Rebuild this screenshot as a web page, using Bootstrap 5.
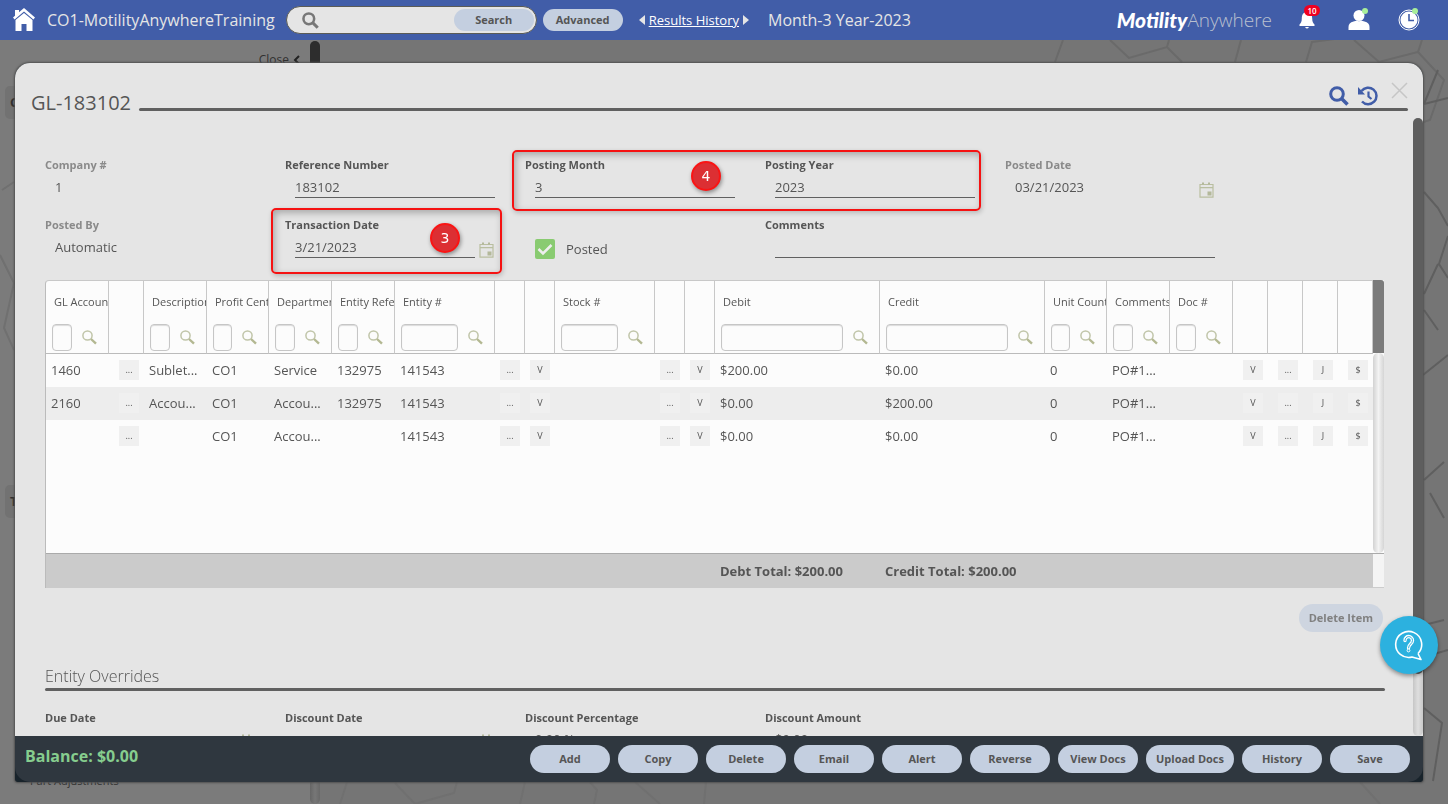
<!DOCTYPE html>
<html lang="en">
<head>
<meta charset="utf-8">
<meta name="viewport" content="width=device-width, initial-scale=1">
<title>GL-183102</title>
<link href="https://cdn.jsdelivr.net/npm/bootstrap@5.3.0/dist/css/bootstrap.min.css" rel="stylesheet">
<style>
body{font-family:"Open Sans","Noto Sans",sans-serif;font-size:13px;line-height:20px;color:#555;background:#757575;height:100vh;overflow:hidden}
.topbar{flex:none;height:40px;background:#415da8;color:#e5e5e5;padding:0 28px 0 13px;font-size:16px;white-space:nowrap}
.topbar svg,.panel svg,.help svg{display:block;flex:none}
.search{flex:none;width:251px;height:28px;border:1px solid #5b5b55;border-radius:14px;background:#e5e5e5;padding:0 2px 0 15px;margin:0 6px 0 11px}
.search input{border:0;background:none;min-width:0;outline:0;font-size:13px}
.pill{border:0;border-radius:14px;background:#c4cfe0;color:#555;font-size:11px;font-weight:700;line-height:16px;min-width:80px;height:28px;padding:0 10px}
.topbar .pill{height:22px;border-radius:11px}
.history{font-size:13px}
.history a{color:#fff}
.period{margin-left:19px}
.brand-a{font-family:Lato,sans-serif;font-weight:900;font-style:italic;font-size:21px;color:#fff}
.brand-b{font-weight:300;font-size:19px;color:#b9c0cf;margin-right:22px}
.alerts{top:-6px;left:6px;width:16px;height:11px;border-radius:6px;background:#f00020;color:#fff;font-size:8px;line-height:11px;font-weight:600;text-align:center}
.online{top:-1px;right:2px;width:6px;height:6px;border-radius:3px;background:#a9ef9a}
.stage{background:#757575}
.web{inset:0;width:100%;height:100%}
.side{width:320px;background:#7b7b7b;color:#303030;padding:10px 0 0 5px}
.side-bar{right:0;top:1px;bottom:0;width:10px;border-radius:5px;background:linear-gradient(90deg,#666,#777 50%,#696969)}
.side-bar::before{content:"";display:block;height:50%;border-radius:5px;background:#2d2d2d}
.side-close{font-size:12px}
.side-head{width:290px;height:33px;border-radius:5px;background:#727272;font-weight:700;padding:6px 5px}
.side-gap{height:366px}
.side-link{padding:253px 0 0 25px;font-size:11px}
.panel{top:63px;left:15px;right:25px;bottom:22px;border-radius:15px 15px 3px 3px;background:#18232b;box-shadow:0 0 2px 1px #505050;overflow:hidden}
.panel-head{flex:none;height:55px;background:#e5e5e5;padding:0 15px 7px 16px}
.panel-head h1{font-size:20px;line-height:24px;font-weight:400;margin:0;padding-top:28px}
.bar{height:3px;border-radius:2px;background:#606060}
.tools{right:15px;top:19px}
.plain{border:0;background:none;padding:0}
.panel-body{background:#e5e5e5;min-height:0}
.scroller{overflow:hidden;padding:39px 28px 0 30px}
.vbar{width:10px;border-radius:5px;background:linear-gradient(90deg,#c6c6c6,#dedede 50%,#c9c9c9);flex:none}
.vbar::before{content:"";display:block;height:90%;border-radius:5px;background:#5e5e5e}
.fields{display:grid;grid-template-columns:repeat(auto-fill,240px);grid-auto-rows:60px}
.field{padding-right:30px}
.field label{display:block;font-size:11px;line-height:16px;font-weight:700;color:#555}
.field .val{margin:4px 0 0 10px;gap:4px}
.field input[type=text]{width:200px;height:21px;border:0;border-bottom:1px solid #606060;background:none;color:#555;padding:0;font-size:13px;outline:0;border-radius:0}
.field .dated{width:180px!important}
.field .still{border-color:transparent!important}
.field svg{margin-top:4px}
.field.muted label{color:#8a8a8a}
.wide{grid-column:span 2}
.field.wide input[type=text]{width:440px}
.check{padding:22px 0 0 10px;gap:11px}
.check input{appearance:none;margin:0;width:20px;height:20px;border-radius:2px;background:#89cb71 url("data:image/svg+xml,%3Csvg xmlns='http://www.w3.org/2000/svg' viewBox='0 0 20 20'%3E%3Cpath d='M3.500 10l4.500 4.500L16.500 6' fill='none' stroke='%23eee' stroke-width='2.500'/%3E%3C/svg%3E")}
.callout{border:2px solid #f51212;border-radius:5px;box-shadow:1px 2px 5px #0003,inset 2px 3px 7px #0004;pointer-events:none}
.call-a{left:467px;top:-7px;width:469px;height:61px}
.call-b{left:226px;top:51px;width:231px;height:66px}
.dot{width:30px;height:30px;border-radius:50%;border:2px solid #fa1414;background:#dc2f33;color:#fff;font:14px/26px "DejaVu Sans",sans-serif;text-align:center;box-shadow:1px 2px 4px #0006}
.call-a .dot{left:177px;top:9px}
.call-b .dot{left:157px;top:13px}
.gridbox{margin-top:3px;margin-right:2px}
.gl{table-layout:fixed;width:100%;border-collapse:separate;border-spacing:0;background:#fcfcfc;border-left:1px solid #bbb;border-top:1px solid #c8c8c8;border-top-left-radius:4px}
.gl th{height:73px;border-right:1px solid #c8c8c8;border-bottom:1px solid #bbb;padding:0;font-weight:400;vertical-align:top;overflow:hidden}
.gl th span{display:block;font-size:11px;line-height:16px;padding:13px 0 14px 8px;white-space:nowrap;overflow:hidden}
.filter{padding:0 11px 0 6px;gap:10px}
.filter input{flex:1;min-width:0;height:27px;border:1px solid #c6c6c6;border-radius:4px;background:none;padding:0 3px;box-shadow:inset 0 1px 1px #0002}
.gl td{height:33px;padding:0 0 2px 5px;white-space:nowrap;overflow:hidden;text-overflow:ellipsis;vertical-align:middle}
.gl td.act{padding:0 5px 2px 0;text-align:right}
.act button{display:block;margin-left:auto;width:20px;height:20px;border:0;background:#f0f0f0;color:#555;font-size:9px;line-height:20px;padding:0}
.gl tbody tr:nth-child(2){background:#ededed}
.gl tbody tr:last-child td{height:100px}
.gl tfoot td{height:35px;background:#cbcbcb;border-top:1px solid #aaa;font-weight:700;padding-bottom:0;overflow:visible}
.gutter{width:11px;flex:none;background:#fcfcfc}
.g-top{height:73px;background:#7b7b7b;border-radius:0 3px 0 0}
.g-mid{border-radius:5px;background:linear-gradient(90deg,#d2d2d2,#f3f3f3 50%,#d5d5d5)}
.g-low{height:35px;background:#f4f4f4;border-top:1px solid #aaa;border-bottom:1px solid #ccc}
.pill:disabled{color:#808080;background:#ced5e0}
.sub{font-size:16px;line-height:24px;font-weight:300;margin:32px 0 0}
.overrides{margin-top:19px}
.overrides .val{margin-top:3px}
.panel-foot{flex:none;min-height:46px;background:#2f373f;padding:9px 13px 9px 10px;border-radius:0 0 15px 15px}
.balance{font-size:16px;line-height:22px;font-weight:700;color:#86cd8e}
.help{right:10px;top:616px;width:58px;height:58px;border-radius:50%;border:0;background:#2cb1df;box-shadow:0 2px 4px #0006;padding:0 0 0 14px}
</style>
</head>
<body class="d-flex flex-column">
<svg width="0" height="0" class="position-absolute">
<symbol id="mag" viewBox="0 0 15 15"><circle cx="5.500" cy="5.500" r="4.600" fill="none" stroke="#c0c5a9" stroke-width="1.500"/><path d="M9 9l5 4.700" stroke="#b3b892" stroke-width="2.400"/></symbol>
<symbol id="lens" viewBox="0 0 20 20"><circle cx="8" cy="8" r="6.300" fill="none" stroke="currentColor" stroke-width="3"/><path d="M12.500 12.500l6 6" stroke="currentColor" stroke-width="3.600"/></symbol>
<symbol id="cal" viewBox="0 0 15 16"><path d="M1 2.500h13v12.700H1zM1 5.700h13" fill="none" stroke="#b9bea0" stroke-width="1.200"/><path d="M3 .5h2v2H3zM9 .5h2v2H9zM8.500 9.500h4v4h-4z" fill="#b3b89a"/></symbol>
</svg>

<header class="topbar d-flex align-items-center">
<a href="#" aria-label="Home"><svg width="22" height="24" viewBox="0 0 22 24"><path d="M11 0l11 9.500-1.600 1.900L11 3.500l-9.400 7.900L0 9.500 2 7.800V2h4v2.300z" fill="#fff"/><path d="M11 5l8.500 7.100V23h-6v-7h-5v7h-6V12.100z" fill="#fff"/></svg></a>
<span class="ms-2 ps-1">CO1-MotilityAnywhereTraining</span>
<form class="search d-flex align-items-center">
<svg width="17" height="17" color="#777"><use href="#lens"/></svg>
<input type="text" class="flex-grow-1" aria-label="Search text"><button type="button" class="pill">Search</button>
</form>
<button type="button" class="pill">Advanced</button>
<nav class="history d-flex align-items-center gap-1 ms-3">
<svg width="6" height="10"><path d="M6 0v10L0 5z" fill="#e5e5e5"/></svg><a href="#">Results History</a><svg width="6" height="10"><path d="M0 0v10l6-5z" fill="#e5e5e5"/></svg>
</nav>
<span class="period">Month-3 Year-2023</span>
<div class="ms-auto d-flex align-items-center">
<span class="brand-a">Motility</span><span class="brand-b">Anywhere</span>
<a href="#" class="position-relative ms-1" aria-label="Notifications"><svg width="18" height="18" viewBox="0 0 18 18"><path d="M9 1c4 0 5.200 3 5.200 6.500 0 3.500 1 4.500 2.300 6V15h-15v-1.500c1.300-1.500 2.300-2.500 2.300-6C3.800 4 5 1 9 1zM7 16h4q-2 3-4 0z" fill="#fff"/></svg><span class="alerts position-absolute">10</span></a>
<a href="#" class="position-relative ms-4 ps-1" aria-label="Account"><svg class="ms-1" width="22" height="22" viewBox="0 0 22 22"><circle cx="11" cy="6.500" r="5.500" fill="#fff"/><path d="M.5 21v-3q0-4.500 5-5.500l3.500-1q2 1.500 4 0l3.500 1q5 1 5 5.500v3z" fill="#fff"/></svg><span class="online position-absolute"></span></a>
<a href="#" class="position-relative ms-4" aria-label="Time clock"><svg class="ms-1" width="22" height="22" viewBox="0 0 22 22"><circle cx="11" cy="11" r="10" fill="none" stroke="#fff"/><circle cx="11" cy="11" r="8.500" fill="#fff"/><path d="M11 5v6.500h5" fill="none" stroke="#415da8" stroke-width="1.600"/></svg><span class="online position-absolute"></span></a>
</div>
</header>

<main class="stage flex-grow-1 position-relative overflow-hidden">
<aside class="side position-relative h-100">
<div class="side-bar position-absolute"></div>
<div class="side-close d-flex justify-content-end align-items-center gap-1 pe-3 me-1"><span>Close</span><svg width="7" height="10"><path d="M6 1L2 5l4 4" fill="none" stroke="#222" stroke-width="2"/></svg></div>
<div class="side-head mt-3">C</div>
<div class="side-gap"></div>
<div class="side-head">T</div>
<div class="side-gap d-flex flex-column"><span class="side-link">Part Adjustments</span></div>
</aside>
<svg class="web position-absolute" viewBox="0 0 1448 764" preserveAspectRatio="none" fill="none" stroke="#6a6a6a" stroke-width="2">
<path d="M1055 22l8-22M1110 0l19 18 38-11 15 15M1167 7l2-7M1235 22l6-22M1306 22l6-20 30-4M1354 0l25 22 39-10 4-12M1418 12l26 28-14 40-16 5"/>
<path d="M1424 270l14 20M1423 335l25-20M1448 186l-10-18-14-16M1448 196l-9 28 9 14M1424 254l14-30M1424 585l20-5M1424 440l20-18M1424 617l24-7M1424 668l18 15-9 58M1430 453l14 25M1424 64l14-34M1424 64l24-6" stroke="#5f5f5f"/>
<path d="M340 764l7-22 18-6M395 743l20 21 39-11 3-11M525 742l-5 22M590 742l7 8-3 14M635 742l25 22M704 764l2-22M1360 742l20 22M2 150l12-8M0 215l14 28-10 45 10 22" stroke="#707070"/>
</svg>
</main>

<section class="panel position-fixed d-flex flex-column" role="dialog" aria-label="GL-183102">
<div class="panel-head position-relative d-flex align-items-end">
<h1 class="align-self-start">GL-183102</h1><div class="bar flex-grow-1 ms-2"></div>
<div class="tools position-absolute d-flex align-items-start gap-2">
<button type="button" class="plain mt-1" aria-label="Find"><svg width="20" height="20" color="#415da8"><use href="#lens"/></svg></button>
<button type="button" class="plain mt-1" aria-label="History"><svg width="22" height="20" viewBox="0 0 22 20"><path d="M4.500 5A8.300 8.300 0 1 1 5 15.500" fill="none" stroke="#415da8" stroke-width="2.500"/><path d="M1 1v7.500h7z" fill="#415da8"/><path d="M11.500 5.500v5l3 2.500" fill="none" stroke="#415da8" stroke-width="2.200"/></svg></button>
<button type="button" class="plain ms-1" aria-label="Close"><svg width="17" height="17"><path d="M1 1l15 15M16 1L1 16" stroke="#c6c6c6" stroke-width="1.500"/></svg></button>
</div>
</div>

<div class="panel-body d-flex flex-grow-1">
<div class="scroller flex-grow-1">
<div class="fields position-relative">
<div class="field muted"><label for="co">Company #</label><div class="val d-flex"><input id="co" class="still" type="text" value="1" readonly></div></div>
<div class="field"><label for="ref">Reference Number</label><div class="val d-flex"><input id="ref" type="text" value="183102"></div></div>
<div class="field"><label for="pm">Posting Month</label><div class="val d-flex"><input id="pm" type="text" value="3"></div></div>
<div class="field"><label for="py">Posting Year</label><div class="val d-flex"><input id="py" type="text" value="2023"></div></div>
<div class="field muted"><label for="pd">Posted Date</label><div class="val d-flex align-items-center"><input id="pd" class="still dated" type="text" value="03/21/2023" readonly><svg width="15" height="16"><use href="#cal"/></svg></div></div>
<div class="field muted"><label for="pb">Posted By</label><div class="val d-flex"><input id="pb" class="still" type="text" value="Automatic" readonly></div></div>
<div class="field"><label for="td">Transaction Date</label><div class="val d-flex align-items-center"><input id="td" class="dated" type="text" value="3/21/2023"><svg width="15" height="16"><use href="#cal"/></svg></div></div>
<div class="check d-flex align-items-start"><input type="checkbox" id="posted" checked><label for="posted">Posted</label></div>
<div class="field wide"><label for="cm">Comments</label><div class="val d-flex"><input id="cm" type="text"></div></div>
<div class="callout call-a position-absolute"><span class="dot position-absolute">4</span></div>
<div class="callout call-b position-absolute"><span class="dot position-absolute">3</span></div>
</div>

<div class="gridbox d-flex">
<table class="gl">
<colgroup><col width="63"><col width="35"><col width="63"><col width="62"><col width="63"><col width="63"><col width="100"><col width="30"><col width="30"><col width="100"><col width="30"><col width="30"><col width="165"><col width="165"><col width="62"><col width="63"><col width="63"><col width="35"><col width="35"><col width="35"><col width="35"></colgroup>
<thead><tr id="heads"></tr></thead>
<tbody id="lines"></tbody>
<tfoot><tr><td colspan="12"></td><td>Debt Total: $200.00</td><td>Credit Total: $200.00</td><td colspan="7"></td></tr></tfoot>
</table>
<div class="gutter d-flex flex-column"><div class="g-top"></div><div class="g-mid flex-grow-1"></div><div class="g-low"></div></div>
</div>

<div class="text-end mt-3 gridbox"><button type="button" class="pill" disabled>Delete Item</button></div>
<h2 class="sub">Entity Overrides</h2>
<div class="bar"></div>
<div class="fields overrides">
<div class="field"><label for="due">Due Date</label><div class="val d-flex align-items-center"><input id="due" class="dated" type="text"><svg width="15" height="16"><use href="#cal"/></svg></div></div>
<div class="field"><label for="dd">Discount Date</label><div class="val d-flex align-items-center"><input id="dd" class="dated" type="text"><svg width="15" height="16"><use href="#cal"/></svg></div></div>
<div class="field"><label for="dp">Discount Percentage</label><div class="val d-flex"><input id="dp" type="text" value="0.00 %"></div></div>
<div class="field"><label for="da">Discount Amount</label><div class="val d-flex"><input id="da" type="text" value="$0.00"></div></div>
</div>
</div>
<div class="vbar"></div>
</div>

<footer class="panel-foot d-flex align-items-start gap-2">
<div class="balance me-auto">Balance: $0.00</div>
<button type="button" class="pill">Add</button><button type="button" class="pill">Copy</button><button type="button" class="pill">Delete</button><button type="button" class="pill">Email</button><button type="button" class="pill">Alert</button><button type="button" class="pill">Reverse</button><button type="button" class="pill">View Docs</button><button type="button" class="pill">Upload Docs</button><button type="button" class="pill">History</button><button type="button" class="pill">Save</button>
</footer>
</section>
<button type="button" class="help position-fixed" aria-label="Help"><svg width="30" height="32" viewBox="0 0 30 32"><path d="M24 24.500A13 13 0 1 0 18 28l9 2.500-3-6" fill="none" stroke="#fff" stroke-width="1.600" stroke-linejoin="round"/><path d="M11 11.500c0-5.500 7.500-5 7.500 0 0 3.500-4 3.500-4 7.500" fill="none" stroke="#fff" stroke-width="3.400" stroke-linecap="round"/><path d="M11 11.500c0-5.500 7.500-5 7.500 0 0 3.500-4 3.500-4 7.500" fill="none" stroke="#2cb1df" stroke-linecap="round"/><circle cx="14.500" cy="21.500" r="1.400" fill="#2cb1df" stroke="#fff"/></svg></button>

<script src="https://cdn.jsdelivr.net/npm/bootstrap@5.3.0/dist/js/bootstrap.bundle.min.js"></script>
<script>
const heads = ['GL Account','','Description','Profit Cente','Departmen','Entity Refer','Entity #','','','Stock #','','','Debit','Credit','Unit Count','Comments','Doc #','','','',''];
document.getElementById('heads').innerHTML = heads.map(h => h
  ? `<th scope="col"><span>${h}</span><div class="filter d-flex align-items-center"><input type="text" aria-label="Filter ${h}"><svg width="15" height="15"><use href="#mag"/></svg></div></th>`
  : '<th></th>').join('');
const actions = {1:'...', 7:'...', 8:'V', 10:'...', 11:'V', 17:'V', 18:'...', 19:'J', 20:'$'};
const lines = [
  {0:'1460',2:'Sublet...',3:'CO1',4:'Service',5:'132975',6:'141543',12:'$200.00',13:'$0.00',14:'0',15:'PO#1...'},
  {0:'2160',2:'Accou...',3:'CO1',4:'Accou...',5:'132975',6:'141543',12:'$0.00',13:'$200.00',14:'0',15:'PO#1...'},
  {3:'CO1',4:'Accou...',6:'141543',12:'$0.00',13:'$0.00',14:'0',15:'PO#1...'}
];
document.getElementById('lines').innerHTML = lines.map(r => '<tr>' + heads.map((h, i) =>
  actions[i] ? `<td class="act"><button type="button">${actions[i]}</button></td>` : `<td>${r[i] || ''}</td>`).join('') + '</tr>').join('')
  + '<tr><td colspan="21"></td></tr>';
</script>
</body>
</html>
